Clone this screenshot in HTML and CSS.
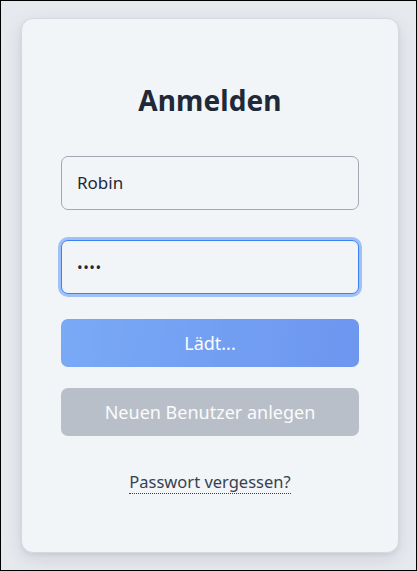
FILE: index.html
```html
<!DOCTYPE html>
<html lang="de">
<head>
<meta charset="utf-8">
<title>Anmelden</title>
<link rel="stylesheet" href="styles.css">
</head>
<body>
<div class="screen">
  <main class="card">
    <h1 class="title">Anmelden</h1>
    <form class="form">
      <input class="field" type="text" value="Robin" aria-label="Benutzername">
      <input class="field field-focus" type="password" value="abcd" aria-label="Passwort">
      <button class="btn btn-primary" type="button" disabled>Lädt...</button>
      <button class="btn btn-secondary" type="button" disabled>Neuen Benutzer anlegen</button>
    </form>
    <a class="forgot" href="#">Passwort vergessen?</a>
  </main>
</div>
</body>
</html>
```
FILE: styles.css
```css
* { box-sizing: border-box; }
html, body { margin: 0; padding: 0; }
body {
  font-family: "Noto Sans", "Open Sans", sans-serif;
  background: #e6e9ee;
}
.screen {
  width: 417px;
  height: 571px;
  border: 1px solid #000;
  display: flex;
  align-items: center;
  padding-left: 20px;
  background: #e6e9ee;
}
.card {
  width: 378px;
  height: 535px;
  background: #f2f5f8;
  border: 1px solid #d6dae0;
  border-radius: 12px;
  box-shadow: 0 6px 18px rgba(15, 23, 42, 0.10), 0 2px 4px rgba(15, 23, 42, 0.06);
  padding: 65px 39px 0;
  display: flex;
  flex-direction: column;
  align-items: stretch;
}
.title {
  margin: 0;
  font-size: 28px;
  line-height: 1.2;
  font-weight: 700;
  color: #1f2937;
  text-align: center;
  letter-spacing: 0.1px;
}
.form {
  margin-top: 38px;
  display: flex;
  flex-direction: column;
}
.field {
  height: 54px;
  border: 1px solid #a3a8b2;
  border-radius: 7px;
  background: #f2f5f8;
  padding: 0 15px;
  font-family: inherit;
  font-size: 17px;
  color: #1f2937;
  outline: none;
}
.field + .field { margin-top: 30px; }
.field-focus {
  border-color: #3b82f6;
  box-shadow: 0 0 0 3px rgba(59, 130, 246, 0.45);
  font-size: 15px;
  letter-spacing: 0.5px;
}
.btn {
  height: 48px;
  border: none;
  border-radius: 7px;
  font-family: inherit;
  font-size: 18px;
  color: #fff;
  opacity: 0.65;
  cursor: default;
}
.btn-primary {
  margin-top: 25px;
  background: linear-gradient(100deg, #3b82f6, #2563eb);
}
.btn-secondary {
  margin-top: 21px;
  background: #9ca3af;
  color: #fff;
}
.forgot {
  align-self: center;
  margin-top: 35px;
  font-size: 16.5px;
  line-height: 22px;
  color: #374151;
  text-decoration: none;
  border-bottom: 1px dotted #374151;
}
```
